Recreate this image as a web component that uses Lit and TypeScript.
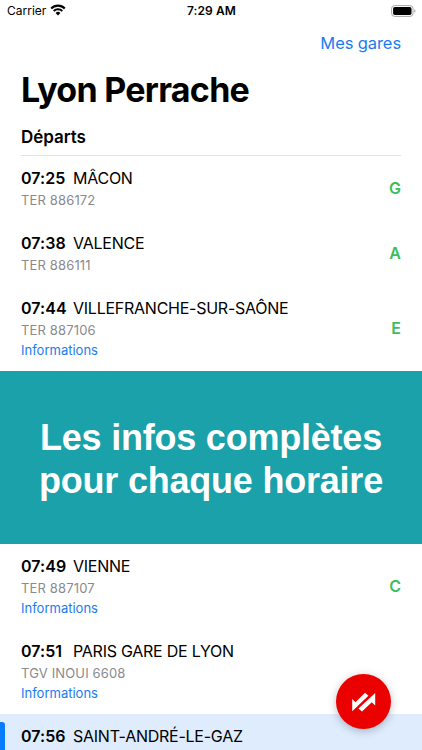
import { LitElement, html, css, nothing } from "lit";
import { customElement, property } from "lit/decorators.js";

interface Departure {
  time: string;
  destination: string;
  train?: string;
  platform?: string;
  info?: boolean;
  selected?: boolean;
}

const BEFORE: Departure[] = [
  { time: "07:25", destination: "MÂCON", train: "TER 886172", platform: "G" },
  { time: "07:38", destination: "VALENCE", train: "TER 886111", platform: "A" },
  { time: "07:44", destination: "VILLEFRANCHE-SUR-SAÔNE", train: "TER 887106", platform: "E", info: true },
];

const AFTER: Departure[] = [
  { time: "07:49", destination: "VIENNE", train: "TER 887107", platform: "C", info: true },
  { time: "07:51", destination: "PARIS GARE DE LYON", train: "TGV INOUI 6608", info: true },
  { time: "07:56", destination: "SAINT-ANDRÉ-LE-GAZ", selected: true },
];

@customElement("status-bar")
class StatusBar extends LitElement {
  static styles = css`
    :host {
      display: grid;
      grid-template-columns: 1fr auto 1fr;
      align-items: center;
      height: 22px;
      padding: 0 6px 0 7px;
      font-size: 12px;
      line-height: 22px;
    }
    .carrier { display: flex; align-items: center; gap: 4px; letter-spacing: 0; }
    .carrier svg { margin-top: -2px; }
    .time { font-weight: 600; font-size: 12px; letter-spacing: 0.1px; }
    .battery { justify-self: end; display: block; }
    svg { display: block; }
  `;
  render() {
    return html`
      <div class="carrier">
        <span>Carrier</span>
        <svg width="16" height="12" viewBox="0 0 16 12">
          <path d="M1.2 4.4A9.6 9.6 0 0 1 14.8 4.4" fill="none" stroke="#000" stroke-width="2.1" />
          <path d="M3.7 7A6.2 6.2 0 0 1 12.3 7" fill="none" stroke="#000" stroke-width="2" />
          <path d="M5.6 9A3.4 3.4 0 0 1 10.4 9L8 11.5Z" />
        </svg>
      </div>
      <div class="time">7:29 AM</div>
      <svg class="battery" width="25" height="12" viewBox="0 0 25 12">
        <rect x="0.6" y="0.6" width="21.4" height="10.8" rx="3" fill="none" stroke="#a6a6a6" />
        <rect x="2.1" y="2.1" width="18.4" height="7.8" rx="1.7" />
        <path d="M23.3 4.2Q24.6 4.8 24.6 6T23.3 7.8Z" fill="#a6a6a6" />
      </svg>
    `;
  }
}

@customElement("departure-row")
class DepartureRow extends LitElement {
  @property({ attribute: false }) departure!: Departure;
  static styles = css`
    :host { display: block; }
    .row {
      position: relative;
      display: flex;
      align-items: center;
      justify-content: space-between;
      padding: 11px 21px 12px;
    }
    .selected { background: #deecfe; min-height: 62px; align-items: flex-start; }
    .marker {
      position: absolute;
      left: -5px;
      top: 8px;
      width: 10px;
      height: 70px;
      border-radius: 3px;
      background: #087bff;
    }
    .heading { display: flex; height: 22px; line-height: 22px; font-size: 16px; }
    .time { width: 52px; font-weight: 600; letter-spacing: 0.05px; }
    .destination { letter-spacing: -0.25px; white-space: nowrap; }
    .train, .info { height: 20px; line-height: 22px; font-size: 13px; }
    .train { color: #8a8a8e; letter-spacing: 0.15px; }
    .info { color: #1a7cf0; letter-spacing: 0; }
    .platform { color: #3ebd5c; font-size: 16px; font-weight: 600; line-height: 22px; }
  `;
  render() {
    const d = this.departure;
    return html`
      <div class="row ${d.selected ? "selected" : ""}">
        ${d.selected ? html`<div class="marker"></div>` : nothing}
        <div>
          <div class="heading">
            <span class="time">${d.time}</span>
            <span class="destination">${d.destination}</span>
          </div>
          ${d.train ? html`<div class="train">${d.train}</div>` : nothing}
          ${d.info ? html`<div class="info">Informations</div>` : nothing}
        </div>
        ${d.platform ? html`<div class="platform">${d.platform}</div>` : nothing}
      </div>
    `;
  }
}

@customElement("app-root")
class AppRoot extends LitElement {
  static styles = css`
    :host {
      display: block;
      position: relative;
      height: 750px;
      overflow: hidden;
      background: #fff;
      color: #000;
      font-family: Inter, "Liberation Sans", sans-serif;
    }
    .nav { display: flex; justify-content: flex-end; padding: 10px 21px 0; height: 35px; line-height: 22px; }
    .link { color: #1a7cf0; font-size: 16.5px; letter-spacing: -0.1px; }
    h1 { margin: 0; padding: 0 21px; height: 47px; line-height: 46px; font-size: 34px; font-weight: 700; letter-spacing: -0.72px; }
    h2 { margin: 0 21px; height: 41px; line-height: 46px; font-size: 17px; font-weight: 600; letter-spacing: -0.05px; border-bottom: 1px solid #e4e4e6; }
    .banner {
      display: flex;
      align-items: center;
      justify-content: center;
      height: 173px;
      padding-top: 2px;
      box-sizing: border-box;
      background: #1aa1a9;
      color: #fff;
      font: 700 36px/43px "Liberation Sans", Arial, sans-serif;
      letter-spacing: -0.22px;
      text-align: center;
      white-space: nowrap;
    }
    .fab {
      position: absolute;
      right: 31px;
      bottom: 21px;
      width: 55px;
      height: 55px;
      border-radius: 50%;
      background: #eb0000;
      box-shadow: 0 2px 8px rgba(0, 0, 0, 0.25);
    }
    .fab svg { display: block; }
  `;
  render() {
    return html`
      <status-bar></status-bar>
      <div class="nav"><span class="link">Mes gares</span></div>
      <h1>Lyon Perrache</h1>
      <h2>Départs</h2>
      <div class="board">${BEFORE.map((d) => html`<departure-row .departure=${d}></departure-row>`)}</div>
      <div class="banner"><div>Les infos complètes<br />pour chaque horaire</div></div>
      <div class="board">${AFTER.map((d) => html`<departure-row .departure=${d}></departure-row>`)}</div>
      <div class="fab">
        <svg width="55" height="55" viewBox="0 0 55 55" fill="#fff">
          <path d="M16.2 25L19.5 28.2L29 18.7L32.4 21.8L16.2 37.2Z" />
          <path d="M39.2 18.9V31.5L35.8 28.2L26 37.6L22.5 34.4Z" />
        </svg>
      </div>
    `;
  }
}
